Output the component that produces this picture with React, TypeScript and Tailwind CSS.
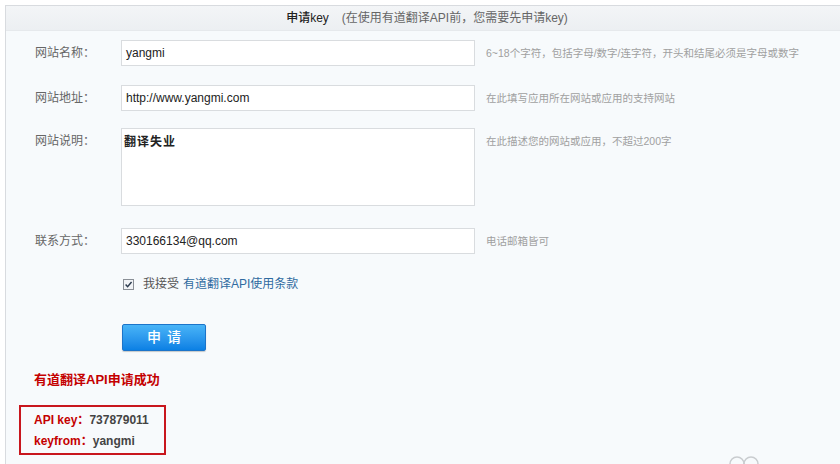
import type { ReactNode } from 'react';

const font = {
  fontFamily: '"Liberation Sans", Arial, "Noto Sans CJK SC", sans-serif',
};

function Label({ children }: { children: ReactNode }) {
  return (
    <div className="w-[86px] shrink-0 pt-[6px] text-[12px] leading-[14px] text-[#666]">
      {children}
    </div>
  );
}

function Hint({ children }: { children: ReactNode }) {
  return (
    <div className="ml-[11px] pt-[7px] text-[10.5px] leading-[13px] text-[#a0a0a0]">{children}</div>
  );
}

function Field({
  label,
  value,
  hint,
  className,
}: {
  label: string;
  value: string;
  hint: string;
  className?: string;
}) {
  return (
    <div className={'flex items-start ' + (className ?? '')}>
      <Label>{label}</Label>
      <div className="flex h-[26px] w-[354px] items-center border border-[#d9dcdf] bg-white px-[4px] text-[12px] text-[#222]">
        {value}
      </div>
      <Hint>{hint}</Hint>
    </div>
  );
}

export default function App() {
  return (
    <div className="relative h-[464px] w-[840px] overflow-hidden bg-white" style={font}>
      <div className="ml-[5px] mt-[5px] h-[480px] w-[850px] border border-[#d8dbdf] bg-[#f7fafc]">
        {/* Header */}
        <div className="flex h-[25px] items-center justify-center border-b border-[#e6e9ec] bg-gradient-to-b from-[#f3f5f7] to-[#eceff2] pr-[6px] text-[12px]">
          <span className="font-medium text-[#222]">申请key</span>
          <span className="ml-[13px] text-[#666]">(在使用有道翻译API前，您需要先申请key)</span>
        </div>

        <div className="pl-[29px]">
          <Field
            className="mt-[9px]"
            label="网站名称："
            value="yangmi"
            hint="6~18个字符，包括字母/数字/连字符，开头和结尾必须是字母或数字"
          />
          <Field
            className="mt-[19px]"
            label="网站地址："
            value="http://www.yangmi.com"
            hint="在此填写应用所在网站或应用的支持网站"
          />

          <div className="mt-[17px] flex items-start">
            <Label>网站说明：</Label>
            <div className="h-[78px] w-[354px] border border-[#d9dcdf] bg-white px-[2px] pt-[6px] text-[12px] font-bold leading-[14px] tracking-[1px] text-[#222]">
              翻译失业
            </div>
            <Hint>在此描述您的网站或应用，不超过200字</Hint>
          </div>

          <Field
            className="mt-[22px]"
            label="联系方式："
            value="330166134@qq.com"
            hint="电话邮箱皆可"
          />

          {/* Agreement */}
          <div className="ml-[88px] mt-[21px] flex items-center text-[12px]">
            <span className="flex h-[11px] w-[11px] items-center justify-center border border-[#8a8f96] bg-[#f1f3f6]">
              <svg viewBox="0 0 10 10" className="h-[9px] w-[9px]">
                <path d="M1.8 5 L4 7.4 L8.4 2.2" fill="none" stroke="#2b3a4d" strokeWidth="1.6" />
              </svg>
            </span>
            <span className="ml-[9px] text-[#555]">我接受</span>
            <span className="ml-[4px] text-[#2f6aa0]">有道翻译API使用条款</span>
          </div>

          {/* Submit */}
          <div className="ml-[87px] mt-[31px]">
            <button className="flex h-[27px] w-[84px] items-center justify-center rounded-[2px] border border-[#1c74c9] bg-gradient-to-b from-[#48b4f7] to-[#0a80e4] text-[14px] font-medium tracking-[6px] text-white shadow-[0_1px_1px_rgba(0,0,0,0.2)]">
              <span className="pl-[6px]">申请</span>
            </button>
          </div>

          {/* Result */}
          <div className="-ml-[1px] mt-[19px] text-[13px] font-bold text-[#c40000]">有道翻译API申请成功</div>
        </div>

        <div className="ml-[13px] mt-[15px] w-[147px] border-2 border-[#c8161d] pb-[1px] pl-[13px] pt-[3px] text-[12px] font-bold leading-[21px]">
          <div>
            <span className="text-[#c40000]">API key：</span>
            <span className="text-[#444]">737879011</span>
          </div>
          <div>
            <span className="text-[#c40000]">keyfrom：</span>
            <span className="text-[#444]">yangmi</span>
          </div>
        </div>
      </div>

      {/* faint watermark circles */}
      <svg className="absolute left-[728px] top-[454px]" width="36" height="14" viewBox="0 0 36 14">
        <circle cx="9" cy="10" r="7" fill="none" stroke="#c9cccf" strokeWidth="1.5" />
        <circle cx="23" cy="10" r="7" fill="none" stroke="#c9cccf" strokeWidth="1.5" />
      </svg>
    </div>
  );
}
